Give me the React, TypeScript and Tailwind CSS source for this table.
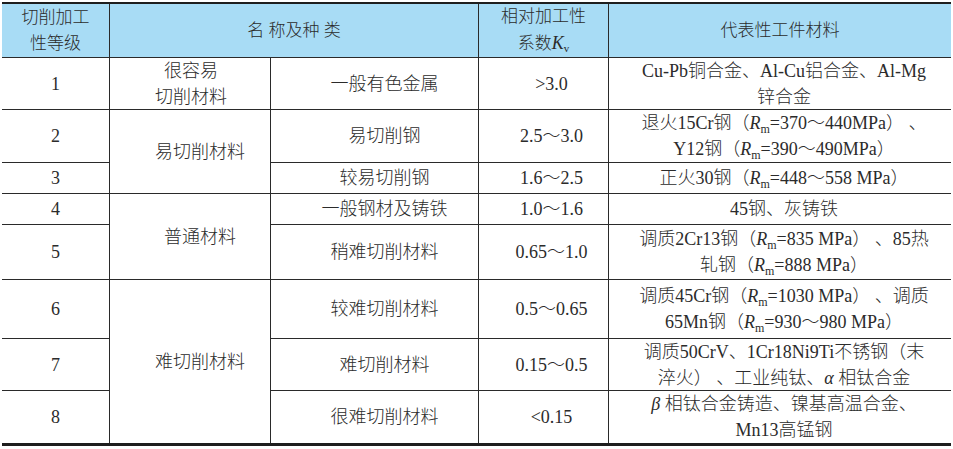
import React from "react";

const R = ({ v }: { v: string }) => (
  <>
    <i>R</i>
    <sub className="text-[12px] bottom-[-0.35em]">m</sub>
    {v}
  </>
);

const cell = "bg-white flex flex-col items-center justify-center text-center leading-[26px]";
const head = "bg-[#a8dcf5] flex flex-col items-center justify-center text-center leading-[26px] text-[17px]";

export default function App() {
  return (
    <div
      className="w-[953px] h-[449px] bg-white pt-[2px] pl-[2px] text-[#2b2b2b] text-[18px] font-light"
      style={{ fontFamily: '"Liberation Serif", "Noto Sans CJK SC", serif' }}
    >
      <div className="w-[949px] grid grid-cols-[107px_160px_207px_129px_342px] grid-rows-[53px_51px_52px_30px_30px_54px_58px_51px_52px] gap-px bg-[#2a2a2a] border-t-2 border-b-[3px] border-[#1e1e1e]">
        {/* header */}
        <div className={head}>
          <span>切削加工</span>
          <span>性等级</span>
        </div>
        <div className={`${head} col-span-2`}>名 称及种 类</div>
        <div className={head}>
          <span>相对加工性</span>
          <span>
            系数<i className="text-[18px]">K</i>
            <sub className="text-[11px] bottom-[-0.3em]">v</sub>
          </span>
        </div>
        <div className={head}>代表性工件材料</div>

        {/* row 1 */}
        <div className={cell}>1</div>
        <div className={`${cell} pl-[2px]`}>
          <span>很容易</span>
          <span>切削材料</span>
        </div>
        <div className={`${cell} pl-5`}>一般有色金属</div>
        <div className={`${cell} pl-4`}>&gt;3.0</div>
        <div className={`${cell} pl-2`}>
          <span>Cu-Pb铜合金、Al-Cu铝合金、Al-Mg</span>
          <span>锌合金</span>
        </div>

        {/* row 2 */}
        <div className={cell}>2</div>
        <div className={`${cell} row-span-2 pl-5`}>易切削材料</div>
        <div className={`${cell} pl-5`}>易切削钢</div>
        <div className={`${cell} pl-4`}>2.5～3.0</div>
        <div className={`${cell} pl-2`}>
          <span>
            退火15Cr钢（<R v="=370～440MPa" />） 、
          </span>
          <span>
            Y12钢（<R v="=390～490MPa" />）
          </span>
        </div>

        {/* row 3 */}
        <div className={cell}>3</div>
        <div className={`${cell} pl-5`}>较易切削钢</div>
        <div className={`${cell} pl-4`}>1.6～2.5</div>
        <div className={`${cell} pl-2`}>
          <span>
            正火30钢（<R v="=448～558 MPa" />）
          </span>
        </div>

        {/* row 4 */}
        <div className={cell}>4</div>
        <div className={`${cell} row-span-2 pl-5`}>普通材料</div>
        <div className={`${cell} pl-5`}>一般钢材及铸铁</div>
        <div className={`${cell} pl-4`}>1.0～1.6</div>
        <div className={`${cell} pl-2`}>45钢、灰铸铁</div>

        {/* row 5 */}
        <div className={cell}>5</div>
        <div className={`${cell} pl-5`}>稍难切削材料</div>
        <div className={`${cell} pl-4`}>0.65～1.0</div>
        <div className={`${cell} pl-2`}>
          <span>
            调质2Cr13钢（<R v="=835 MPa" />） 、85热
          </span>
          <span>
            轧钢（<R v="=888 MPa" />）
          </span>
        </div>

        {/* row 6 */}
        <div className={cell}>6</div>
        <div className={`${cell} row-span-3 pl-5`}>难切削材料</div>
        <div className={`${cell} pl-5`}>较难切削材料</div>
        <div className={`${cell} pl-4`}>0.5～0.65</div>
        <div className={`${cell} pl-2`}>
          <span>
            调质45Cr钢（<R v="=1030 MPa" />） 、调质
          </span>
          <span>
            65Mn钢（<R v="=930～980 MPa" />）
          </span>
        </div>

        {/* row 7 */}
        <div className={cell}>7</div>
        <div className={`${cell} pl-5`}>难切削材料</div>
        <div className={`${cell} pl-4`}>0.15～0.5</div>
        <div className={`${cell} pl-2`}>
          <span>调质50CrV、1Cr18Ni9Ti不锈钢（末</span>
          <span>
            淬火） 、工业纯钛、<i>α</i> 相钛合金
          </span>
        </div>

        {/* row 8 */}
        <div className={cell}>8</div>
        <div className={`${cell} pl-5`}>很难切削材料</div>
        <div className={`${cell} pl-4`}>&lt;0.15</div>
        <div className={`${cell} pl-2`}>
          <span>
            <i>β</i> 相钛合金铸造、镍基高温合金、
          </span>
          <span>Mn13高锰钢</span>
        </div>
      </div>
    </div>
  );
}
